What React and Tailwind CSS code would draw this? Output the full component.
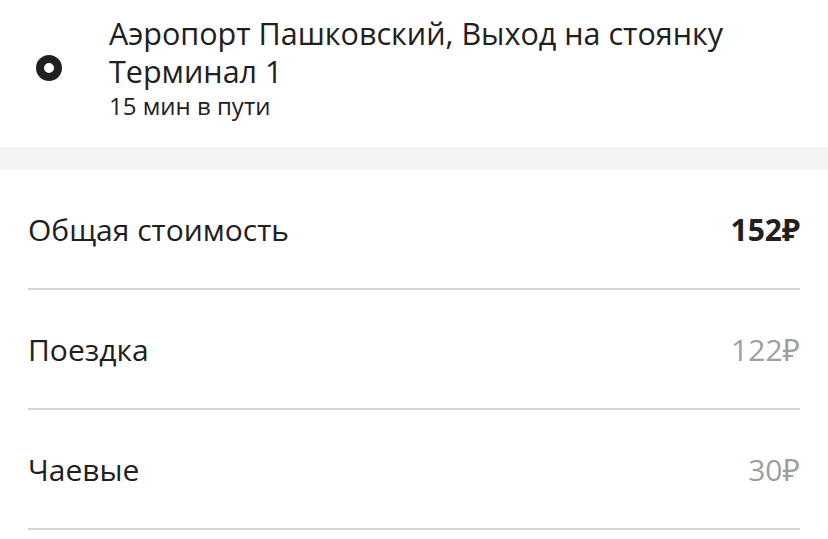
import React from "react";

const rows = [
  { label: "Общая стоимость", value: "152₽", bold: true },
  { label: "Поездка", value: "122₽" },
  { label: "Чаевые", value: "30₽" },
];

export default function App() {
  return (
    <div className="h-[539px] w-[828px] overflow-hidden bg-white text-[#21201f]" style={{ fontFamily: '"Open Sans", "Noto Sans", sans-serif' }}>
      <div className="flex h-[147px] items-start">
        <div className="w-[109px] shrink-0 pt-[55px] pl-[36px]">
          <div className="h-[26px] w-[26px] rounded-full border-[8px] border-[#21201f]" />
        </div>
        <div className="pt-[14px]">
          <p className="text-[30.5px] leading-[38px]">Аэропорт Пашковский, Выход на стоянку</p>
          <p className="text-[30.5px] leading-[38px]">Терминал 1</p>
          <p className="text-[24px] leading-[32px]">15 мин в пути</p>
        </div>
      </div>
      <div className="h-[23px] bg-[#f3f3f1]" />
      <div className="px-[28px]">
        {rows.map((row) => (
          <div key={row.label} className="flex h-[120px] items-center justify-between border-b-2 border-[#d5d5d5]">
            <span className="text-[30px]">{row.label}</span>
            <span className={row.bold ? "text-[30px] font-bold text-[#21201f]" : "text-[30px] text-[#9e9e9e]"}>
              {row.value}
            </span>
          </div>
        ))}
      </div>
    </div>
  );
}
